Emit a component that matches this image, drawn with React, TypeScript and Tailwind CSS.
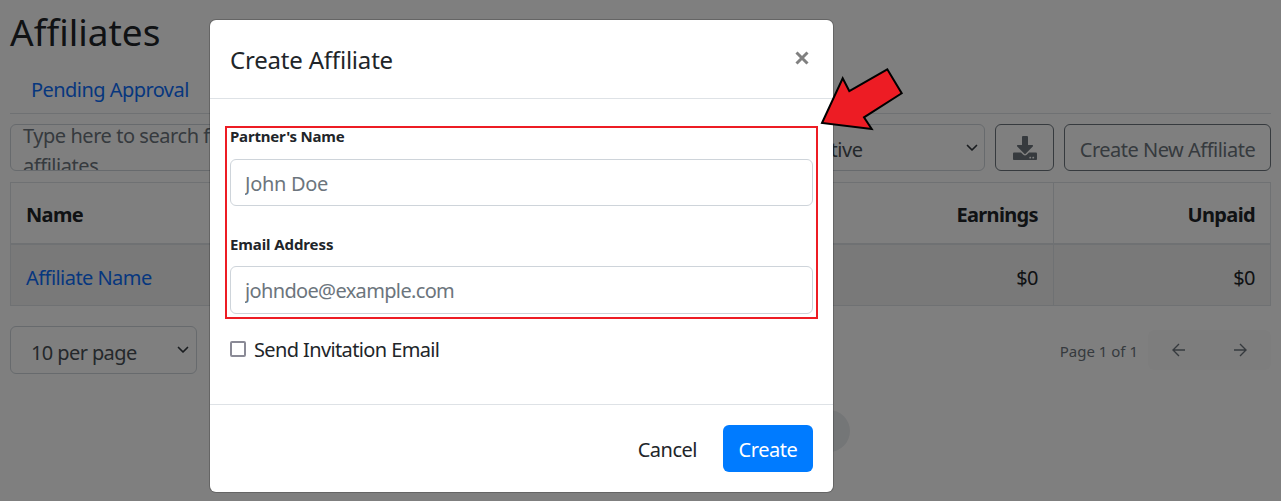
import { FaDownload } from "react-icons/fa";

const Chevron = () => (
  <svg width="12" height="12" viewBox="0 0 12 12" fill="none" className="shrink-0">
    <path d="M1.5 3.5 6 8 10.5 3.5" stroke="#343a40" strokeWidth="1.7" strokeLinecap="round" strokeLinejoin="round" />
  </svg>
);

const ArrowL = () => (
  <svg width="16" height="16" viewBox="0 0 16 16" fill="none">
    <path d="M14 8H2M8 2 2 8l6 6" stroke="#6c757d" strokeWidth="1.4" />
  </svg>
);
const ArrowR = () => (
  <svg width="16" height="16" viewBox="0 0 16 16" fill="none">
    <path d="M2 8h12M8 2l6 6-6 6" stroke="#6c757d" strokeWidth="1.4" />
  </svg>
);

const Background = () => (
  <div className="w-[1281px] h-[501px] bg-white overflow-hidden px-[10px] text-[#212529] relative">
    <h1 className="text-[37px] leading-[43px] h-[43px] mt-[10px] font-normal">Affiliates</h1>
    <div className="h-[61px] border-b border-[#dee2e6] flex pl-[21px] pt-[22px]">
      <span className="text-[20px] leading-[30px] text-[#0d6efd] tracking-[-0.55px]">Pending Approval</span>
    </div>
    <div className="flex mt-[10px] h-[47px] gap-[10px]">
      <div className="w-[300px] border border-[#ced4da] rounded-md px-3 text-[20px] leading-[30px] text-[#6c757d] overflow-hidden tracking-[-0.45px] whitespace-normal">
        <div className="-mt-[4px]">Type here to search for affiliates</div>
      </div>
      <div className="flex-1 flex items-center justify-between border border-[#ced4da] rounded-md pl-[488px] pr-[6px] text-[20px] text-[#495057] tracking-[-0.45px]">
        <span className="pt-[5px]">Active</span>
        <Chevron />
      </div>
      <div className="w-[59px] border border-[#6c757d] rounded-md flex items-center justify-center">
        <FaDownload className="w-6 h-6 text-[#6c757d]" />
      </div>
      <div className="w-[207px] border border-[#6c757d] rounded-md flex items-center justify-center text-[20px] text-[#6c757d] tracking-[-0.5px]">
        <span className="pt-[5px]">Create New Affiliate</span>
      </div>
    </div>
    <div className="mt-[11px] border border-[#dee2e6] w-[1261px]">
      <div className="h-[62px] flex items-center border-b-2 border-[#dee2e6] font-bold text-[20px] tracking-[-0.65px]">
        <div className="w-[808px] pl-[15px] pt-[4px]">Name</div>
        <div className="w-[235px] h-full flex items-center justify-end pr-[15px] pt-[4px] border-r border-[#dee2e6]">Earnings</div>
        <div className="flex-1 text-right pr-[15px] pt-[4px]">Unpaid</div>
      </div>
      <div className="h-[60px] flex items-center bg-black/[0.05] text-[20px] tracking-[-0.55px]">
        <div className="w-[808px] pl-[15px] pt-[5px] text-[#0d6efd]">Affiliate Name</div>
        <div className="w-[235px] h-full flex items-center justify-end pr-[15px] pt-[5px] border-r border-[#dee2e6]">$0</div>
        <div className="flex-1 text-right pr-[15px] pt-[5px]">$0</div>
      </div>
    </div>
    <div className="flex items-start justify-between mt-[20px]">
      <div className="w-[187px] h-[48px] border border-[#ced4da] rounded-md flex items-center justify-between pl-[20px] pr-[7px] text-[20px] text-[#495057] tracking-[-0.6px]">
        <span className="pt-[5px]">10 per page</span>
        <Chevron />
      </div>
      <div className="flex items-center gap-[10px] mt-[4px]">
        <span className="text-[15px] text-[#6c757d] pt-[2px]">Page 1 of 1</span>
        <div className="w-[123px] h-[40px] bg-[#fbfbfb] rounded-md flex items-center justify-around pl-[1px] pr-[1px]">
          <ArrowL />
          <ArrowR />
        </div>
      </div>
    </div>
    <div className="absolute left-[780px] top-[410px] w-[70px] h-[42px] rounded-full bg-[#e9ecef]" />
  </div>
);

export default function App() {
  return (
    <div className="relative w-[1281px] h-[501px] overflow-hidden font-['Noto_Sans',sans-serif]">
      <Background />
      <div className="absolute inset-0 bg-black/50" />
      <div className="absolute left-[210px] top-[20px] w-[623px] h-[472px] bg-white rounded-md flex flex-col text-[#212529] shadow-[0_0_0_1px_rgba(0,0,0,0.2)]">
        <div className="h-[79px] shrink-0 border-b border-[#dee2e6] flex items-center justify-between pl-[20px] pr-[24px]">
          <span className="text-[24px] tracking-[-0.2px] pt-[2px]">Create Affiliate</span>
          <svg width="14" height="14" viewBox="0 0 14 14" className="-mt-[2px]">
            <path d="M1.5 1.5 12.5 12.5M12.5 1.5 1.5 12.5" stroke="#808080" strokeWidth="3" />
          </svg>
        </div>
        <div className="flex-1 px-[20px] pt-[27px]">
          <div className="-mx-[5px] h-[193px] border-2 border-[#ed1c24] px-[3px]">
            <div className="text-[15px] font-bold leading-[16px] tracking-[-0.2px]">Partner's Name</div>
            <input
              placeholder="John Doe"
              className="mt-[15px] block w-[583px] h-[47px] border border-[#ced4da] rounded-md px-[14px] pt-[2px] text-[20px] tracking-[-0.3px] placeholder:text-[#6c757d] outline-none"
            />
            <div className="mt-[29px] text-[15px] font-bold leading-[18px] tracking-[-0.1px]">Email Address</div>
            <input
              placeholder="johndoe@example.com"
              className="mt-[13px] block w-[583px] h-[48px] border border-[#ced4da] rounded-md px-[14px] pt-[1px] text-[20px] tracking-[-0.65px] placeholder:text-[#6c757d] outline-none"
            />
          </div>
          <div className="flex items-center mt-[18px]">
            <span className="w-[16px] h-[16px] border-2 border-[#8a8a96] rounded-[2px] bg-white -mt-[2px]" />
            <span className="ml-[8px] text-[20px] leading-[26px] tracking-[-0.62px]">Send Invitation Email</span>
          </div>
        </div>
        <div className="h-[88px] shrink-0 border-t border-[#dee2e6] flex items-start justify-end pt-[20px] pr-[20px]">
          <span className="h-[47px] flex items-center text-[20px] mr-[26px] tracking-[-0.5px] pt-[3px]">Cancel</span>
          <span className="w-[90px] h-[47px] rounded-md bg-[#007bff] text-white text-[20px] flex items-center justify-center tracking-[-0.45px] pt-[3px]">Create</span>
        </div>
      </div>
      <svg className="absolute left-[815px] top-[62px]" width="95" height="75" viewBox="815 62 95 75">
        <polygon
          points="822,123 842.7,78.3 849.3,91 887.3,69.3 901.7,93.3 864,117.3 871.7,129"
          fill="#ed1c24"
          stroke="#000"
          strokeWidth="2"
        />
      </svg>
    </div>
  );
}
